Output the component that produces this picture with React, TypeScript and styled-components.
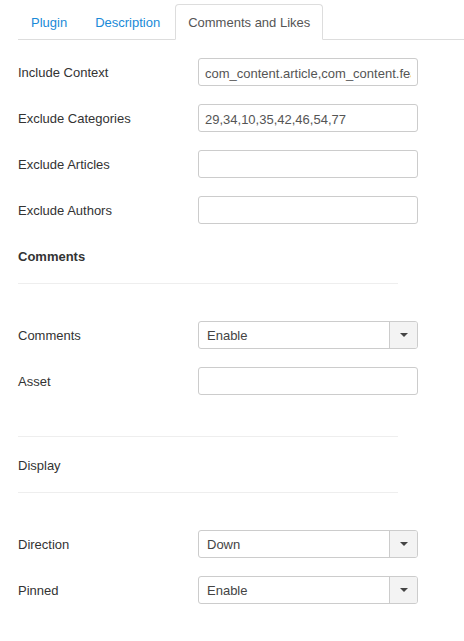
import React from "react";
import styled, { createGlobalStyle, css } from "styled-components";

const GlobalStyle = createGlobalStyle`
  html, body { margin: 0; padding: 0; background: #fff; }
  body {
    font-family: "Liberation Sans", Arial, sans-serif;
    font-size: 13px;
    line-height: 18px;
    color: #333;
  }
  * { box-sizing: border-box; }
`;

const Page = styled.div`
  padding: 4px 0 0 18px;
`;

const TabList = styled.ul`
  display: flex;
  list-style: none;
  margin: 0 0 18px 0;
  padding: 0;
  border-bottom: 1px solid #ddd;
`;

const Tab = styled.li<{ $active?: boolean }>`
  margin: 0 2px -1px 0;
  padding: 9px 12px 7px;
  line-height: 18px;
  border: 1px solid transparent;
  border-radius: 4px 4px 0 0;
  color: #1a8ad8;
  cursor: pointer;
  ${(p) =>
    p.$active &&
    css`
      color: #555;
      background: #fff;
      border-color: #ddd #ddd transparent;
    `}
`;

const ControlGroup = styled.div`
  display: flex;
  align-items: flex-start;
  margin-bottom: 18px;
`;

const Label = styled.label`
  width: 180px;
  flex: none;
  padding-top: 6px;
  line-height: 18px;
  color: #333;
`;

const SpacerBlock = styled.div`
  width: 380px;
  padding-top: 5px;
  line-height: 18px;
  color: #333;
`;

const SpacerText = styled.div`
  padding-top: 1px;
  margin-bottom: -1px;
`;

const Strong = styled.strong`
  font-weight: bold;
`;

const Rule = styled.hr`
  margin: 18px 0;
  height: 0;
  border: 0;
  border-top: 1px solid #eee;
  border-bottom: 1px solid #fff;
`;

const TextInput = styled.input`
  width: 220px;
  height: 28px;
  padding: 5px 6px 3px;
  border: 1px solid #ccc;
  border-radius: 3px;
  font-family: "Liberation Sans", Arial, sans-serif;
  font-size: 13px;
  line-height: 18px;
  color: #555;
  background: #fff;
  outline: none;
`;

const Select = styled.div`
  display: flex;
  width: 220px;
  height: 28px;
  border: 1px solid #ccc;
  border-radius: 3px;
  background: #fff;
  overflow: hidden;
`;

const SelectValue = styled.span`
  flex: 1;
  padding: 1px 0 0 8px;
  line-height: 25px;
  color: #444;
`;

const SelectButton = styled.span`
  width: 28px;
  flex: none;
  display: flex;
  align-items: center;
  justify-content: center;
  border-left: 1px solid #ccc;
  background: #f3f3f3;
`;

const Caret = styled.span`
  width: 0;
  height: 0;
  border-top: 4px solid #444;
  border-left: 4px solid transparent;
  border-right: 4px solid transparent;
`;

const TextRow = ({ label, value = "" }: { label: string; value?: string }) => (
  <ControlGroup>
    <Label>{label}</Label>
    <TextInput type="text" value={value} readOnly />
  </ControlGroup>
);

const SelectRow = ({ label, value }: { label: string; value: string }) => (
  <ControlGroup>
    <Label>{label}</Label>
    <Select>
      <SelectValue>{value}</SelectValue>
      <SelectButton>
        <Caret />
      </SelectButton>
    </Select>
  </ControlGroup>
);

export default function App() {
  return (
    <>
      <GlobalStyle />
      <Page>
        <TabList>
          <Tab>Plugin</Tab>
          <Tab>Description</Tab>
          <Tab $active>Comments and Likes</Tab>
        </TabList>

        <TextRow label="Include Context" value="com_content.article,com_content.featured" />
        <TextRow label="Exclude Categories" value="29,34,10,35,42,46,54,77" />
        <TextRow label="Exclude Articles" />
        <TextRow label="Exclude Authors" />

        <ControlGroup>
          <SpacerBlock>
            <SpacerText>
              <Strong>Comments</Strong>
            </SpacerText>
            <Rule />
          </SpacerBlock>
        </ControlGroup>

        <SelectRow label="Comments" value="Enable" />
        <TextRow label="Asset" />

        <ControlGroup>
          <SpacerBlock>
            <Rule />
            <SpacerText>Display</SpacerText>
            <Rule />
          </SpacerBlock>
        </ControlGroup>

        <SelectRow label="Direction" value="Down" />
        <SelectRow label="Pinned" value="Enable" />
      </Page>
    </>
  );
}
